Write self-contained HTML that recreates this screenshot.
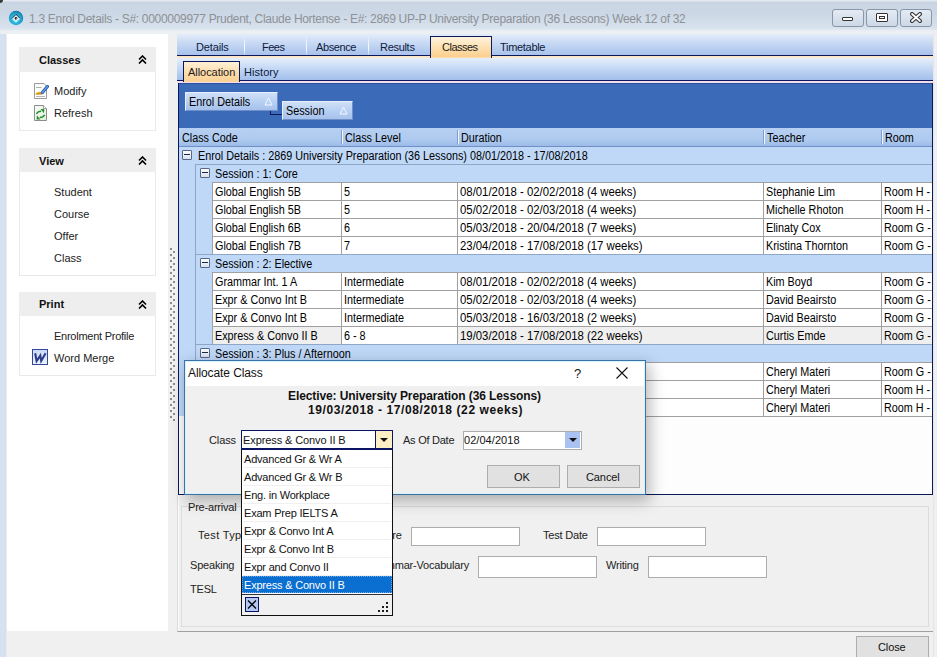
<!DOCTYPE html>
<html><head><meta charset="utf-8">
<style>
*{box-sizing:border-box;margin:0;padding:0}
html,body{width:937px;height:657px;overflow:hidden;background:#f0f0f0;font-family:"Liberation Sans",sans-serif;font-size:11px;color:#000}
.a{position:absolute}
.t{position:absolute;white-space:pre}
</style></head><body>
<div class="a" style="left:0;top:0;width:937px;height:657px;background:#f0f0f0;overflow:hidden">

<div class="a" style="left:0px;top:0px;width:937px;height:30px;background:linear-gradient(#e9eef4,#c9d5e2 8%,#ccd8e5 50%,#d6e1ec 90%,#dfe8f0)"></div>
<div class="a" style="left:0px;top:30px;width:937px;height:4px;background:linear-gradient(#e9eef3,#eef0f3)"></div>
<div class="a" style="left:0px;top:34px;width:7px;height:623px;background:linear-gradient(90deg,#d3e2f5,#d5e2f2 45%,#d9e0ea 80%,#eef3f8)"></div>
<div class="a" style="left:933px;top:34px;width:4px;height:623px;background:linear-gradient(90deg,#e2e2e2,#f2f2f2 50%,#e8eef6)"></div>
<div class="a" style="left:-3px;top:-3px;width:6px;height:6px;border-radius:3px;background:#3a3a3a"></div>
<svg class="a" style="left:8px;top:10px" width="16" height="16" viewBox="0 0 16 16">
<defs><radialGradient id="ag" cx="0.45" cy="0.6" r="0.6"><stop offset="0" stop-color="#3fcbef"/><stop offset="0.7" stop-color="#23a3cf"/><stop offset="1" stop-color="#13739e"/></radialGradient></defs>
<circle cx="8" cy="8" r="7.2" fill="url(#ag)"/>
<path d="M8 4.4 L12.1 8.4 L8 12.4 L3.9 8.6 Z" fill="#e4f4f8"/>
<path d="M3.9 8.6 L8 4.4 L12.1 8.4" fill="none" stroke="#16222a" stroke-width="0.9"/>
<path d="M3.9 8.6 L8 12.4 L12.1 8.4" fill="none" stroke="#8ee8fb" stroke-width="0.9"/>
<circle cx="8" cy="8.4" r="1.3" fill="#1a1420"/><circle cx="8.3" cy="8.9" r="0.6" fill="#f4f0f4"/>
</svg>
<div class="t" style="left:29px;top:11.84px;font-size:12px;line-height:14px;color:#8e9197;letter-spacing:-0.3px;">1.3 Enrol Details - S#: 0000009977 Prudent, Claude Hortense - E#: 2869 UP-P University Preparation (36 Lessons) Week 12 of 32</div>
<div class="a" style="left:832px;top:9px;width:32px;height:18px;border:1px solid #8996a8;border-radius:3px;background:linear-gradient(#e4ebf4,#cdd8e6)"></div>
<div class="a" style="left:866px;top:9px;width:32px;height:18px;border:1px solid #8996a8;border-radius:3px;background:linear-gradient(#e4ebf4,#cdd8e6)"></div>
<div class="a" style="left:900px;top:9px;width:32px;height:18px;border:1px solid #8996a8;border-radius:3px;background:linear-gradient(#e4ebf4,#cdd8e6)"></div>
<div class="a" style="left:842px;top:17px;width:11px;height:4px;border:1px solid #333;background:#fff;border-radius:1px"></div>
<div class="a" style="left:876px;top:13px;width:12px;height:9px;border:1px solid #333;background:#fff;border-radius:1px"></div>
<div class="a" style="left:879px;top:16px;width:6px;height:3px;border:1px solid #333"></div>
<svg class="a" style="left:909px;top:12px" width="14" height="11" viewBox="0 0 14 11"><path d="M3 2 L11 9 M11 2 L3 9" stroke="#333" stroke-width="4" stroke-linecap="round"/><path d="M3 2 L11 9 M11 2 L3 9" stroke="#fff" stroke-width="1.8" stroke-linecap="round"/></svg>
<div class="a" style="left:7px;top:34px;width:161px;height:597px;background:#fff"></div>
<div class="a" style="left:19px;top:47px;width:137px;height:84px;border:1px solid #e9e9e9;background:#fff"></div>
<div class="a" style="left:19px;top:47px;width:137px;height:25px;background:#eeeeee"></div>
<div class="t" style="left:39px;top:53.69px;font-size:11px;line-height:13px;font-weight:bold;color:#111;">Classes</div>
<svg class="a" style="left:138px;top:55px" width="9" height="9" viewBox="0 0 9 9"><path d="M1 4.5 L4.5 1 L8 4.5 M1 8.5 L4.5 5 L8 8.5" fill="none" stroke="#000" stroke-width="1.6"/></svg>
<svg class="a" style="left:34px;top:83px" width="15" height="16" viewBox="0 0 15 16">
<path d="M0.5 0.5 H10 L12.5 3 V15.5 H0.5 Z" fill="#fdfdfd" stroke="#999"/>
<path d="M2 4.5 H7.5" stroke="#a8b89a" stroke-width="1"/>
<path d="M2 13.5 H11" stroke="#b8b8b8" stroke-width="1"/>
<path d="M1.8 10.8 Q3.5 7.6 7.6 9.2 L8 11 L1.8 11.2 Z" fill="#f2b418"/>
<path d="M1.8 11 H8" stroke="#b87a10" stroke-width="1"/>
<path d="M8.4 9.6 L13.4 3.6" stroke="#2456a8" stroke-width="3.2" stroke-linecap="round"/>
<path d="M8.4 9.6 L13.4 3.6" stroke="#5f98e8" stroke-width="1.6" stroke-linecap="round"/>
</svg>
<svg class="a" style="left:34px;top:105px" width="14" height="16" viewBox="0 0 14 16">
<defs><linearGradient id="rg" x1="0" y1="0" x2="1" y2="1"><stop offset="0" stop-color="#f6fbf4"/><stop offset="1" stop-color="#dff2da"/></linearGradient></defs>
<path d="M0.5 0.5 H9.5 L12.5 3.5 V15.5 H0.5 Z" fill="url(#rg)" stroke="#8e8e8e"/>
<path d="M9.5 0.5 V3.5 H12.5" fill="#fff" stroke="#9a9a9a"/>
<path d="M2.4 9 Q4 6.2 7.2 6.3" fill="none" stroke="#2d8a34" stroke-width="1.4"/>
<path d="M6.6 4 L10.2 4 L10 8.2 Z" fill="#2d8a34"/>
<path d="M10.6 9.8 Q9.2 12.4 5.8 12.5" fill="none" stroke="#2d8a34" stroke-width="1.4"/>
<path d="M6.4 14.6 L2.6 14.4 L2.9 10.2 Z" fill="#2d8a34"/>
</svg>
<div class="t" style="left:54px;top:84.69px;font-size:11px;line-height:13px;color:#222;">Modify</div>
<div class="t" style="left:54px;top:106.69px;font-size:11px;line-height:13px;color:#222;">Refresh</div>
<div class="a" style="left:19px;top:148px;width:137px;height:128px;border:1px solid #e9e9e9;background:#fff"></div>
<div class="a" style="left:19px;top:148px;width:137px;height:24px;background:#eeeeee"></div>
<div class="t" style="left:39px;top:154.69px;font-size:11px;line-height:13px;font-weight:bold;color:#111;">View</div>
<svg class="a" style="left:138px;top:156px" width="9" height="9" viewBox="0 0 9 9"><path d="M1 4.5 L4.5 1 L8 4.5 M1 8.5 L4.5 5 L8 8.5" fill="none" stroke="#000" stroke-width="1.6"/></svg>
<div class="t" style="left:54px;top:185.69px;font-size:11px;line-height:13px;color:#222;">Student</div>
<div class="t" style="left:54px;top:207.69px;font-size:11px;line-height:13px;color:#222;">Course</div>
<div class="t" style="left:54px;top:229.69px;font-size:11px;line-height:13px;color:#222;">Offer</div>
<div class="t" style="left:54px;top:251.69px;font-size:11px;line-height:13px;color:#222;">Class</div>
<div class="a" style="left:19px;top:292px;width:137px;height:84px;border:1px solid #e9e9e9;background:#fff"></div>
<div class="a" style="left:19px;top:292px;width:137px;height:24px;background:#eeeeee"></div>
<div class="t" style="left:39px;top:297.69px;font-size:11px;line-height:13px;font-weight:bold;color:#111;">Print</div>
<svg class="a" style="left:138px;top:300px" width="9" height="9" viewBox="0 0 9 9"><path d="M1 4.5 L4.5 1 L8 4.5 M1 8.5 L4.5 5 L8 8.5" fill="none" stroke="#000" stroke-width="1.6"/></svg>
<div class="t" style="left:54px;top:329.69px;font-size:11px;line-height:13px;color:#222;letter-spacing:-0.25px;">Enrolment Profile</div>
<svg class="a" style="left:32px;top:349px" width="16" height="16" viewBox="0 0 16 16">
<defs><linearGradient id="wg" x1="0" y1="0" x2="0" y2="1"><stop offset="0" stop-color="#c9d9f6"/><stop offset="1" stop-color="#eef5ff"/></linearGradient></defs>
<rect x="0.5" y="0.5" width="15" height="15" fill="url(#wg)" stroke="#34479a"/>
<path d="M3.2 4.2 L4.6 12 L8.3 6.6 L9.2 12 L13.6 4.2" fill="none" stroke="#2c3d8c" stroke-width="2.1" stroke-linejoin="miter"/>
</svg>
<div class="t" style="left:54px;top:351.69px;font-size:11px;line-height:13px;color:#222;">Word Merge</div>
<div class="a" style="left:168px;top:34px;width:9px;height:597px;background:#f0f0f0"></div>
<div class="a" style="left:170px;top:248px;width:2px;height:2px;background:#8c8c8c"></div>
<div class="a" style="left:173px;top:251px;width:2px;height:2px;background:#8c8c8c"></div>
<div class="a" style="left:170px;top:254px;width:2px;height:2px;background:#8c8c8c"></div>
<div class="a" style="left:173px;top:257px;width:2px;height:2px;background:#8c8c8c"></div>
<div class="a" style="left:170px;top:260px;width:2px;height:2px;background:#8c8c8c"></div>
<div class="a" style="left:173px;top:263px;width:2px;height:2px;background:#8c8c8c"></div>
<div class="a" style="left:170px;top:266px;width:2px;height:2px;background:#8c8c8c"></div>
<div class="a" style="left:173px;top:269px;width:2px;height:2px;background:#8c8c8c"></div>
<div class="a" style="left:170px;top:272px;width:2px;height:2px;background:#8c8c8c"></div>
<div class="a" style="left:173px;top:275px;width:2px;height:2px;background:#8c8c8c"></div>
<div class="a" style="left:170px;top:278px;width:2px;height:2px;background:#8c8c8c"></div>
<div class="a" style="left:173px;top:281px;width:2px;height:2px;background:#8c8c8c"></div>
<div class="a" style="left:170px;top:284px;width:2px;height:2px;background:#8c8c8c"></div>
<div class="a" style="left:173px;top:287px;width:2px;height:2px;background:#8c8c8c"></div>
<div class="a" style="left:170px;top:290px;width:2px;height:2px;background:#8c8c8c"></div>
<div class="a" style="left:173px;top:293px;width:2px;height:2px;background:#8c8c8c"></div>
<div class="a" style="left:170px;top:296px;width:2px;height:2px;background:#8c8c8c"></div>
<div class="a" style="left:173px;top:299px;width:2px;height:2px;background:#8c8c8c"></div>
<div class="a" style="left:170px;top:302px;width:2px;height:2px;background:#8c8c8c"></div>
<div class="a" style="left:173px;top:305px;width:2px;height:2px;background:#8c8c8c"></div>
<div class="a" style="left:170px;top:308px;width:2px;height:2px;background:#8c8c8c"></div>
<div class="a" style="left:173px;top:311px;width:2px;height:2px;background:#8c8c8c"></div>
<div class="a" style="left:170px;top:314px;width:2px;height:2px;background:#8c8c8c"></div>
<div class="a" style="left:173px;top:317px;width:2px;height:2px;background:#8c8c8c"></div>
<div class="a" style="left:170px;top:320px;width:2px;height:2px;background:#8c8c8c"></div>
<div class="a" style="left:173px;top:323px;width:2px;height:2px;background:#8c8c8c"></div>
<div class="a" style="left:170px;top:326px;width:2px;height:2px;background:#8c8c8c"></div>
<div class="a" style="left:173px;top:329px;width:2px;height:2px;background:#8c8c8c"></div>
<div class="a" style="left:170px;top:332px;width:2px;height:2px;background:#8c8c8c"></div>
<div class="a" style="left:173px;top:335px;width:2px;height:2px;background:#8c8c8c"></div>
<div class="a" style="left:170px;top:338px;width:2px;height:2px;background:#8c8c8c"></div>
<div class="a" style="left:173px;top:341px;width:2px;height:2px;background:#8c8c8c"></div>
<div class="a" style="left:170px;top:344px;width:2px;height:2px;background:#8c8c8c"></div>
<div class="a" style="left:173px;top:347px;width:2px;height:2px;background:#8c8c8c"></div>
<div class="a" style="left:170px;top:350px;width:2px;height:2px;background:#8c8c8c"></div>
<div class="a" style="left:173px;top:353px;width:2px;height:2px;background:#8c8c8c"></div>
<div class="a" style="left:170px;top:356px;width:2px;height:2px;background:#8c8c8c"></div>
<div class="a" style="left:173px;top:359px;width:2px;height:2px;background:#8c8c8c"></div>
<div class="a" style="left:170px;top:362px;width:2px;height:2px;background:#8c8c8c"></div>
<div class="a" style="left:173px;top:365px;width:2px;height:2px;background:#8c8c8c"></div>
<div class="a" style="left:170px;top:368px;width:2px;height:2px;background:#8c8c8c"></div>
<div class="a" style="left:173px;top:371px;width:2px;height:2px;background:#8c8c8c"></div>
<div class="a" style="left:170px;top:374px;width:2px;height:2px;background:#8c8c8c"></div>
<div class="a" style="left:173px;top:377px;width:2px;height:2px;background:#8c8c8c"></div>
<div class="a" style="left:170px;top:380px;width:2px;height:2px;background:#8c8c8c"></div>
<div class="a" style="left:173px;top:383px;width:2px;height:2px;background:#8c8c8c"></div>
<div class="a" style="left:170px;top:386px;width:2px;height:2px;background:#8c8c8c"></div>
<div class="a" style="left:173px;top:389px;width:2px;height:2px;background:#8c8c8c"></div>
<div class="a" style="left:170px;top:392px;width:2px;height:2px;background:#8c8c8c"></div>
<div class="a" style="left:173px;top:395px;width:2px;height:2px;background:#8c8c8c"></div>
<div class="a" style="left:170px;top:398px;width:2px;height:2px;background:#8c8c8c"></div>
<div class="a" style="left:173px;top:401px;width:2px;height:2px;background:#8c8c8c"></div>
<div class="a" style="left:170px;top:404px;width:2px;height:2px;background:#8c8c8c"></div>
<div class="a" style="left:173px;top:407px;width:2px;height:2px;background:#8c8c8c"></div>
<div class="a" style="left:170px;top:410px;width:2px;height:2px;background:#8c8c8c"></div>
<div class="a" style="left:173px;top:413px;width:2px;height:2px;background:#8c8c8c"></div>
<div class="a" style="left:170px;top:416px;width:2px;height:2px;background:#8c8c8c"></div>
<div class="a" style="left:173px;top:419px;width:2px;height:2px;background:#8c8c8c"></div>
<div class="a" style="left:177px;top:34px;width:756px;height:21px;background:linear-gradient(#e4edfa,#c9daf4 40%,#a8c2ec)"></div>
<div class="a" style="left:177px;top:55px;width:756px;height:1px;background:#0b1859"></div>
<div class="a" style="left:177px;top:56px;width:756px;height:2px;background:linear-gradient(#fde3bd,#f9e9d4)"></div>
<div class="a" style="left:244px;top:37px;width:1px;height:18px;background:linear-gradient(rgba(255,255,255,0.2),#f4f8ff 40%,#f4f8ff 70%,rgba(255,255,255,0.3))"></div>
<div class="a" style="left:306px;top:37px;width:1px;height:18px;background:linear-gradient(rgba(255,255,255,0.2),#f4f8ff 40%,#f4f8ff 70%,rgba(255,255,255,0.3))"></div>
<div class="a" style="left:368px;top:37px;width:1px;height:18px;background:linear-gradient(rgba(255,255,255,0.2),#f4f8ff 40%,#f4f8ff 70%,rgba(255,255,255,0.3))"></div>
<div class="a" style="left:430px;top:36px;width:62px;height:22px;border:1px solid #0b1859;border-bottom:0;background:linear-gradient(#fff3dc,#fde0b0 50%,#fbcf8f 95%,#fde3bd)"></div>
<div class="t" style="left:196px;top:40.69px;font-size:11px;line-height:13px;color:#0d1a40;letter-spacing:-0.15px;">Details</div>
<div class="t" style="left:262px;top:40.69px;font-size:11px;line-height:13px;color:#0d1a40;letter-spacing:-0.5px;">Fees</div>
<div class="t" style="left:316px;top:40.69px;font-size:11px;line-height:13px;color:#0d1a40;letter-spacing:-0.4px;">Absence</div>
<div class="t" style="left:380px;top:40.69px;font-size:11px;line-height:13px;color:#0d1a40;letter-spacing:-0.3px;">Results</div>
<div class="t" style="left:442px;top:40.69px;font-size:11px;line-height:13px;color:#1a1a1a;letter-spacing:-0.5px;">Classes</div>
<div class="t" style="left:500px;top:40.69px;font-size:11px;line-height:13px;color:#0d1a40;letter-spacing:-0.3px;">Timetable</div>
<div class="a" style="left:177px;top:58px;width:756px;height:22px;background:linear-gradient(#e6effc,#c6d9f5 45%,#a2bfec)"></div>
<div class="a" style="left:177px;top:80px;width:756px;height:1px;background:#0b1859"></div>
<div class="a" style="left:177px;top:81px;width:756px;height:2px;background:#f1dcf0"></div>
<div class="a" style="left:183px;top:61px;width:57px;height:21px;border:1px solid #0b1859;border-bottom:0;background:linear-gradient(#fff1d8,#fddcaa 55%,#fbd093)"></div>
<div class="t" style="left:188px;top:65.69px;font-size:11px;line-height:13px;color:#1a1a1a;letter-spacing:-0.05px;">Allocation</div>
<div class="t" style="left:244px;top:65.69px;font-size:11px;line-height:13px;color:#0d1a40;letter-spacing:0.05px;">History</div>
<div class="a" style="left:178px;top:83px;width:755px;height:412px;background:#3b6bb8;border:1px solid #0b1859;border-top:0"></div>
<div class="a" style="left:179px;top:83px;width:753px;height:1px;background:#2a4f98"></div>
<div class="a" style="left:270px;top:110px;width:1px;height:5px;background:#0b1859"></div>
<div class="a" style="left:270px;top:114px;width:12px;height:1px;background:#0b1859"></div>
<div class="a" style="left:185px;top:92px;width:93px;height:19px;background:linear-gradient(#cfe0f8,#b4cdf1 60%,#a6c1ec);border-right:1px solid #6f8fc8;border-bottom:1px solid #6f8fc8;border-left:1px solid #e6efff;border-top:1px solid #e6efff"></div>
<div class="t" style="left:189px;top:94.84px;font-size:12px;line-height:14px;color:#000;transform:scaleX(0.9);transform-origin:0 0;">Enrol Details</div>
<svg class="a" style="left:264px;top:97px" width="9" height="9" viewBox="0 0 9 9"><path d="M4.5 1 L8 8 L1 8 Z" fill="none" stroke="#f4f8ff" stroke-width="1"/></svg>
<div class="a" style="left:282px;top:101px;width:71px;height:19px;background:linear-gradient(#cfe0f8,#b4cdf1 60%,#a6c1ec);border-right:1px solid #6f8fc8;border-bottom:1px solid #6f8fc8;border-left:1px solid #e6efff;border-top:1px solid #e6efff"></div>
<div class="t" style="left:286px;top:103.84px;font-size:12px;line-height:14px;color:#000;transform:scaleX(0.9);transform-origin:0 0;">Session</div>
<svg class="a" style="left:339px;top:106px" width="9" height="9" viewBox="0 0 9 9"><path d="M4.5 1 L8 8 L1 8 Z" fill="none" stroke="#f4f8ff" stroke-width="1"/></svg>
<div class="a" style="left:179px;top:128px;width:753px;height:19px;background:linear-gradient(#b7d0f2,#aecaef 65%,#9dbbe8);border-bottom:1px solid #6f90c6"></div>
<div class="a" style="left:341px;top:130px;width:1px;height:14px;background:#7f9cd0"></div>
<div class="a" style="left:342px;top:130px;width:1px;height:14px;background:#f2f7ff"></div>
<div class="a" style="left:457px;top:130px;width:1px;height:14px;background:#7f9cd0"></div>
<div class="a" style="left:458px;top:130px;width:1px;height:14px;background:#f2f7ff"></div>
<div class="a" style="left:763px;top:130px;width:1px;height:14px;background:#7f9cd0"></div>
<div class="a" style="left:764px;top:130px;width:1px;height:14px;background:#f2f7ff"></div>
<div class="a" style="left:881px;top:130px;width:1px;height:14px;background:#7f9cd0"></div>
<div class="a" style="left:882px;top:130px;width:1px;height:14px;background:#f2f7ff"></div>
<div class="t" style="left:182px;top:130.84px;font-size:12px;line-height:14px;color:#000;transform:scaleX(0.9);transform-origin:0 0;">Class Code</div>
<div class="t" style="left:345px;top:130.84px;font-size:12px;line-height:14px;color:#000;transform:scaleX(0.9);transform-origin:0 0;">Class Level</div>
<div class="t" style="left:461px;top:130.84px;font-size:12px;line-height:14px;color:#000;transform:scaleX(0.9);transform-origin:0 0;">Duration</div>
<div class="t" style="left:767px;top:130.84px;font-size:12px;line-height:14px;color:#000;transform:scaleX(0.9);transform-origin:0 0;">Teacher</div>
<div class="t" style="left:885px;top:130.84px;font-size:12px;line-height:14px;color:#000;transform:scaleX(0.9);transform-origin:0 0;">Room</div>
<div class="a" style="left:179px;top:147px;width:753px;height:269px;background:#bfd8f8"></div>
<div class="a" style="left:179px;top:416px;width:753px;height:78px;background:#fdfdfd"></div>
<div class="a" style="left:182px;top:150px;width:10px;height:10px;border:1px solid #56688a;border-radius:1px;background:linear-gradient(#ffffff,#d8e0ec)"></div>
<div class="a" style="left:184px;top:154px;width:6px;height:1px;background:#1a2a4a"></div>
<div class="t" style="left:198px;top:148.84px;font-size:12px;line-height:14px;color:#000;transform:scaleX(0.9);transform-origin:0 0;">Enrol Details : 2869 University Preparation (36 Lessons) 08/01/2018 - 17/08/2018</div>
<div class="a" style="left:195px;top:164px;width:737px;height:1px;background:#8fa6c6"></div>
<div class="a" style="left:195px;top:164px;width:1px;height:252px;background:#8fa6c6"></div>
<div class="a" style="left:195px;top:164px;width:737px;height:1px;background:#8fa6c6"></div>
<div class="a" style="left:200px;top:168px;width:10px;height:10px;border:1px solid #56688a;border-radius:1px;background:linear-gradient(#ffffff,#d8e0ec)"></div>
<div class="a" style="left:202px;top:172px;width:6px;height:1px;background:#1a2a4a"></div>
<div class="t" style="left:215px;top:166.84px;font-size:12px;line-height:14px;color:#000;transform:scaleX(0.9);transform-origin:0 0;">Session : 1: Core</div>
<div class="a" style="left:212px;top:182px;width:720px;height:18px;background:#fff"></div>
<div class="a" style="left:212px;top:182px;width:720px;height:1px;background:#a0a0a0"></div>
<div class="a" style="left:212px;top:182px;width:1px;height:18px;background:#a0a0a0"></div>
<div class="a" style="left:341px;top:182px;width:1px;height:18px;background:#a0a0a0"></div>
<div class="a" style="left:457px;top:182px;width:1px;height:18px;background:#a0a0a0"></div>
<div class="a" style="left:763px;top:182px;width:1px;height:18px;background:#a0a0a0"></div>
<div class="a" style="left:881px;top:182px;width:1px;height:18px;background:#a0a0a0"></div>
<div class="t" style="left:215px;top:184.84px;font-size:12px;line-height:14px;color:#000;transform:scaleX(0.9);transform-origin:0 0;">Global English 5B</div>
<div class="t" style="left:344px;top:184.84px;font-size:12px;line-height:14px;color:#000;transform:scaleX(0.9);transform-origin:0 0;">5</div>
<div class="t" style="left:460px;top:184.84px;font-size:12px;line-height:14px;color:#000;transform:scaleX(0.947);transform-origin:0 0;">08/01/2018 - 02/02/2018 (4 weeks)</div>
<div class="t" style="left:766px;top:184.84px;font-size:12px;line-height:14px;color:#000;transform:scaleX(0.9);transform-origin:0 0;">Stephanie Lim</div>
<div class="t" style="left:884px;top:184.84px;font-size:12px;line-height:14px;color:#000;transform:scaleX(0.9);transform-origin:0 0;">Room H -</div>
<div class="a" style="left:212px;top:200px;width:720px;height:18px;background:#fff"></div>
<div class="a" style="left:212px;top:200px;width:720px;height:1px;background:#a0a0a0"></div>
<div class="a" style="left:212px;top:200px;width:1px;height:18px;background:#a0a0a0"></div>
<div class="a" style="left:341px;top:200px;width:1px;height:18px;background:#a0a0a0"></div>
<div class="a" style="left:457px;top:200px;width:1px;height:18px;background:#a0a0a0"></div>
<div class="a" style="left:763px;top:200px;width:1px;height:18px;background:#a0a0a0"></div>
<div class="a" style="left:881px;top:200px;width:1px;height:18px;background:#a0a0a0"></div>
<div class="t" style="left:215px;top:202.84px;font-size:12px;line-height:14px;color:#000;transform:scaleX(0.9);transform-origin:0 0;">Global English 5B</div>
<div class="t" style="left:344px;top:202.84px;font-size:12px;line-height:14px;color:#000;transform:scaleX(0.9);transform-origin:0 0;">5</div>
<div class="t" style="left:460px;top:202.84px;font-size:12px;line-height:14px;color:#000;transform:scaleX(0.947);transform-origin:0 0;">05/02/2018 - 02/03/2018 (4 weeks)</div>
<div class="t" style="left:766px;top:202.84px;font-size:12px;line-height:14px;color:#000;transform:scaleX(0.9);transform-origin:0 0;">Michelle Rhoton</div>
<div class="t" style="left:884px;top:202.84px;font-size:12px;line-height:14px;color:#000;transform:scaleX(0.9);transform-origin:0 0;">Room H -</div>
<div class="a" style="left:212px;top:218px;width:720px;height:18px;background:#fff"></div>
<div class="a" style="left:212px;top:218px;width:720px;height:1px;background:#a0a0a0"></div>
<div class="a" style="left:212px;top:218px;width:1px;height:18px;background:#a0a0a0"></div>
<div class="a" style="left:341px;top:218px;width:1px;height:18px;background:#a0a0a0"></div>
<div class="a" style="left:457px;top:218px;width:1px;height:18px;background:#a0a0a0"></div>
<div class="a" style="left:763px;top:218px;width:1px;height:18px;background:#a0a0a0"></div>
<div class="a" style="left:881px;top:218px;width:1px;height:18px;background:#a0a0a0"></div>
<div class="t" style="left:215px;top:220.84px;font-size:12px;line-height:14px;color:#000;transform:scaleX(0.9);transform-origin:0 0;">Global English 6B</div>
<div class="t" style="left:344px;top:220.84px;font-size:12px;line-height:14px;color:#000;transform:scaleX(0.9);transform-origin:0 0;">6</div>
<div class="t" style="left:460px;top:220.84px;font-size:12px;line-height:14px;color:#000;transform:scaleX(0.947);transform-origin:0 0;">05/03/2018 - 20/04/2018 (7 weeks)</div>
<div class="t" style="left:766px;top:220.84px;font-size:12px;line-height:14px;color:#000;transform:scaleX(0.9);transform-origin:0 0;">Elinaty Cox</div>
<div class="t" style="left:884px;top:220.84px;font-size:12px;line-height:14px;color:#000;transform:scaleX(0.9);transform-origin:0 0;">Room G -</div>
<div class="a" style="left:212px;top:236px;width:720px;height:18px;background:#fff"></div>
<div class="a" style="left:212px;top:236px;width:720px;height:1px;background:#a0a0a0"></div>
<div class="a" style="left:212px;top:236px;width:1px;height:18px;background:#a0a0a0"></div>
<div class="a" style="left:341px;top:236px;width:1px;height:18px;background:#a0a0a0"></div>
<div class="a" style="left:457px;top:236px;width:1px;height:18px;background:#a0a0a0"></div>
<div class="a" style="left:763px;top:236px;width:1px;height:18px;background:#a0a0a0"></div>
<div class="a" style="left:881px;top:236px;width:1px;height:18px;background:#a0a0a0"></div>
<div class="t" style="left:215px;top:238.84px;font-size:12px;line-height:14px;color:#000;transform:scaleX(0.9);transform-origin:0 0;">Global English 7B</div>
<div class="t" style="left:344px;top:238.84px;font-size:12px;line-height:14px;color:#000;transform:scaleX(0.9);transform-origin:0 0;">7</div>
<div class="t" style="left:460px;top:238.84px;font-size:12px;line-height:14px;color:#000;transform:scaleX(0.947);transform-origin:0 0;">23/04/2018 - 17/08/2018 (17 weeks)</div>
<div class="t" style="left:766px;top:238.84px;font-size:12px;line-height:14px;color:#000;transform:scaleX(0.9);transform-origin:0 0;">Kristina Thornton</div>
<div class="t" style="left:884px;top:238.84px;font-size:12px;line-height:14px;color:#000;transform:scaleX(0.9);transform-origin:0 0;">Room G -</div>
<div class="a" style="left:212px;top:254px;width:720px;height:1px;background:#a0a0a0"></div>
<div class="a" style="left:195px;top:254px;width:737px;height:1px;background:#8fa6c6"></div>
<div class="a" style="left:200px;top:258px;width:10px;height:10px;border:1px solid #56688a;border-radius:1px;background:linear-gradient(#ffffff,#d8e0ec)"></div>
<div class="a" style="left:202px;top:262px;width:6px;height:1px;background:#1a2a4a"></div>
<div class="t" style="left:215px;top:256.84px;font-size:12px;line-height:14px;color:#000;transform:scaleX(0.9);transform-origin:0 0;">Session : 2: Elective</div>
<div class="a" style="left:212px;top:272px;width:720px;height:18px;background:#fff"></div>
<div class="a" style="left:212px;top:272px;width:720px;height:1px;background:#a0a0a0"></div>
<div class="a" style="left:212px;top:272px;width:1px;height:18px;background:#a0a0a0"></div>
<div class="a" style="left:341px;top:272px;width:1px;height:18px;background:#a0a0a0"></div>
<div class="a" style="left:457px;top:272px;width:1px;height:18px;background:#a0a0a0"></div>
<div class="a" style="left:763px;top:272px;width:1px;height:18px;background:#a0a0a0"></div>
<div class="a" style="left:881px;top:272px;width:1px;height:18px;background:#a0a0a0"></div>
<div class="t" style="left:215px;top:274.84px;font-size:12px;line-height:14px;color:#000;transform:scaleX(0.9);transform-origin:0 0;">Grammar Int. 1 A</div>
<div class="t" style="left:344px;top:274.84px;font-size:12px;line-height:14px;color:#000;transform:scaleX(0.9);transform-origin:0 0;">Intermediate</div>
<div class="t" style="left:460px;top:274.84px;font-size:12px;line-height:14px;color:#000;transform:scaleX(0.947);transform-origin:0 0;">08/01/2018 - 02/02/2018 (4 weeks)</div>
<div class="t" style="left:766px;top:274.84px;font-size:12px;line-height:14px;color:#000;transform:scaleX(0.9);transform-origin:0 0;">Kim Boyd</div>
<div class="t" style="left:884px;top:274.84px;font-size:12px;line-height:14px;color:#000;transform:scaleX(0.9);transform-origin:0 0;">Room G -</div>
<div class="a" style="left:212px;top:290px;width:720px;height:18px;background:#fff"></div>
<div class="a" style="left:212px;top:290px;width:720px;height:1px;background:#a0a0a0"></div>
<div class="a" style="left:212px;top:290px;width:1px;height:18px;background:#a0a0a0"></div>
<div class="a" style="left:341px;top:290px;width:1px;height:18px;background:#a0a0a0"></div>
<div class="a" style="left:457px;top:290px;width:1px;height:18px;background:#a0a0a0"></div>
<div class="a" style="left:763px;top:290px;width:1px;height:18px;background:#a0a0a0"></div>
<div class="a" style="left:881px;top:290px;width:1px;height:18px;background:#a0a0a0"></div>
<div class="t" style="left:215px;top:292.84px;font-size:12px;line-height:14px;color:#000;transform:scaleX(0.9);transform-origin:0 0;">Expr &amp; Convo Int B</div>
<div class="t" style="left:344px;top:292.84px;font-size:12px;line-height:14px;color:#000;transform:scaleX(0.9);transform-origin:0 0;">Intermediate</div>
<div class="t" style="left:460px;top:292.84px;font-size:12px;line-height:14px;color:#000;transform:scaleX(0.947);transform-origin:0 0;">05/02/2018 - 02/03/2018 (4 weeks)</div>
<div class="t" style="left:766px;top:292.84px;font-size:12px;line-height:14px;color:#000;transform:scaleX(0.9);transform-origin:0 0;">David Beairsto</div>
<div class="t" style="left:884px;top:292.84px;font-size:12px;line-height:14px;color:#000;transform:scaleX(0.9);transform-origin:0 0;">Room G -</div>
<div class="a" style="left:212px;top:308px;width:720px;height:18px;background:#fff"></div>
<div class="a" style="left:212px;top:308px;width:720px;height:1px;background:#a0a0a0"></div>
<div class="a" style="left:212px;top:308px;width:1px;height:18px;background:#a0a0a0"></div>
<div class="a" style="left:341px;top:308px;width:1px;height:18px;background:#a0a0a0"></div>
<div class="a" style="left:457px;top:308px;width:1px;height:18px;background:#a0a0a0"></div>
<div class="a" style="left:763px;top:308px;width:1px;height:18px;background:#a0a0a0"></div>
<div class="a" style="left:881px;top:308px;width:1px;height:18px;background:#a0a0a0"></div>
<div class="t" style="left:215px;top:310.84px;font-size:12px;line-height:14px;color:#000;transform:scaleX(0.9);transform-origin:0 0;">Expr &amp; Convo Int B</div>
<div class="t" style="left:344px;top:310.84px;font-size:12px;line-height:14px;color:#000;transform:scaleX(0.9);transform-origin:0 0;">Intermediate</div>
<div class="t" style="left:460px;top:310.84px;font-size:12px;line-height:14px;color:#000;transform:scaleX(0.947);transform-origin:0 0;">05/03/2018 - 16/03/2018 (2 weeks)</div>
<div class="t" style="left:766px;top:310.84px;font-size:12px;line-height:14px;color:#000;transform:scaleX(0.9);transform-origin:0 0;">David Beairsto</div>
<div class="t" style="left:884px;top:310.84px;font-size:12px;line-height:14px;color:#000;transform:scaleX(0.9);transform-origin:0 0;">Room G -</div>
<div class="a" style="left:212px;top:326px;width:720px;height:18px;background:#efefef"></div>
<div class="a" style="left:342px;top:326px;width:116px;height:18px;background:#fff"></div>
<div class="a" style="left:212px;top:326px;width:720px;height:1px;background:#a0a0a0"></div>
<div class="a" style="left:212px;top:326px;width:1px;height:18px;background:#a0a0a0"></div>
<div class="a" style="left:341px;top:326px;width:1px;height:18px;background:#a0a0a0"></div>
<div class="a" style="left:457px;top:326px;width:1px;height:18px;background:#a0a0a0"></div>
<div class="a" style="left:763px;top:326px;width:1px;height:18px;background:#a0a0a0"></div>
<div class="a" style="left:881px;top:326px;width:1px;height:18px;background:#a0a0a0"></div>
<div class="t" style="left:215px;top:328.84px;font-size:12px;line-height:14px;color:#000;transform:scaleX(0.9);transform-origin:0 0;">Express &amp; Convo II B</div>
<div class="t" style="left:344px;top:328.84px;font-size:12px;line-height:14px;color:#000;transform:scaleX(0.9);transform-origin:0 0;">6 - 8</div>
<div class="t" style="left:460px;top:328.84px;font-size:12px;line-height:14px;color:#000;transform:scaleX(0.947);transform-origin:0 0;">19/03/2018 - 17/08/2018 (22 weeks)</div>
<div class="t" style="left:766px;top:328.84px;font-size:12px;line-height:14px;color:#000;transform:scaleX(0.9);transform-origin:0 0;">Curtis Emde</div>
<div class="t" style="left:884px;top:328.84px;font-size:12px;line-height:14px;color:#000;transform:scaleX(0.9);transform-origin:0 0;">Room G -</div>
<div class="a" style="left:212px;top:344px;width:720px;height:1px;background:#a0a0a0"></div>
<div class="a" style="left:195px;top:344px;width:737px;height:1px;background:#8fa6c6"></div>
<div class="a" style="left:200px;top:348px;width:10px;height:10px;border:1px solid #56688a;border-radius:1px;background:linear-gradient(#ffffff,#d8e0ec)"></div>
<div class="a" style="left:202px;top:352px;width:6px;height:1px;background:#1a2a4a"></div>
<div class="t" style="left:215px;top:346.84px;font-size:12px;line-height:14px;color:#000;transform:scaleX(0.9);transform-origin:0 0;">Session : 3: Plus / Afternoon</div>
<div class="a" style="left:212px;top:362px;width:720px;height:18px;background:#fff"></div>
<div class="a" style="left:212px;top:362px;width:720px;height:1px;background:#a0a0a0"></div>
<div class="a" style="left:212px;top:362px;width:1px;height:18px;background:#a0a0a0"></div>
<div class="a" style="left:341px;top:362px;width:1px;height:18px;background:#a0a0a0"></div>
<div class="a" style="left:457px;top:362px;width:1px;height:18px;background:#a0a0a0"></div>
<div class="a" style="left:763px;top:362px;width:1px;height:18px;background:#a0a0a0"></div>
<div class="a" style="left:881px;top:362px;width:1px;height:18px;background:#a0a0a0"></div>
<div class="t" style="left:766px;top:364.84px;font-size:12px;line-height:14px;color:#000;transform:scaleX(0.9);transform-origin:0 0;">Cheryl Materi</div>
<div class="t" style="left:884px;top:364.84px;font-size:12px;line-height:14px;color:#000;transform:scaleX(0.9);transform-origin:0 0;">Room G -</div>
<div class="a" style="left:212px;top:380px;width:720px;height:18px;background:#fff"></div>
<div class="a" style="left:212px;top:380px;width:720px;height:1px;background:#a0a0a0"></div>
<div class="a" style="left:212px;top:380px;width:1px;height:18px;background:#a0a0a0"></div>
<div class="a" style="left:341px;top:380px;width:1px;height:18px;background:#a0a0a0"></div>
<div class="a" style="left:457px;top:380px;width:1px;height:18px;background:#a0a0a0"></div>
<div class="a" style="left:763px;top:380px;width:1px;height:18px;background:#a0a0a0"></div>
<div class="a" style="left:881px;top:380px;width:1px;height:18px;background:#a0a0a0"></div>
<div class="t" style="left:766px;top:382.84px;font-size:12px;line-height:14px;color:#000;transform:scaleX(0.9);transform-origin:0 0;">Cheryl Materi</div>
<div class="t" style="left:884px;top:382.84px;font-size:12px;line-height:14px;color:#000;transform:scaleX(0.9);transform-origin:0 0;">Room H -</div>
<div class="a" style="left:212px;top:398px;width:720px;height:18px;background:#fff"></div>
<div class="a" style="left:212px;top:398px;width:720px;height:1px;background:#a0a0a0"></div>
<div class="a" style="left:212px;top:398px;width:1px;height:18px;background:#a0a0a0"></div>
<div class="a" style="left:341px;top:398px;width:1px;height:18px;background:#a0a0a0"></div>
<div class="a" style="left:457px;top:398px;width:1px;height:18px;background:#a0a0a0"></div>
<div class="a" style="left:763px;top:398px;width:1px;height:18px;background:#a0a0a0"></div>
<div class="a" style="left:881px;top:398px;width:1px;height:18px;background:#a0a0a0"></div>
<div class="t" style="left:766px;top:400.84px;font-size:12px;line-height:14px;color:#000;transform:scaleX(0.9);transform-origin:0 0;">Cheryl Materi</div>
<div class="t" style="left:884px;top:400.84px;font-size:12px;line-height:14px;color:#000;transform:scaleX(0.9);transform-origin:0 0;">Room H -</div>
<div class="a" style="left:212px;top:416px;width:720px;height:1px;background:#a0a0a0"></div>
<div class="a" style="left:177px;top:495px;width:756px;height:137px;background:#f0f0f0;border-left:1px solid #dcdcdc;border-bottom:1px solid #a0a0a0"></div>
<div class="a" style="left:178px;top:495px;width:1px;height:136px;background:#fafafa"></div>
<div class="a" style="left:181px;top:506px;width:748px;height:121px;border:1px solid #dcdcdc;border-left:1px solid #dcdcdc"></div>
<div class="t" style="left:188px;top:500.69px;font-size:11px;line-height:13px;color:#222;letter-spacing:-0.2px;">Pre-arrival</div>
<div class="t" style="left:198px;top:528.69px;font-size:11px;line-height:13px;color:#222;letter-spacing:0.35px;">Test Type</div>
<div class="t" style="left:374px;top:528.69px;font-size:11px;line-height:13px;color:#222;letter-spacing:-0.2px;">Score</div>
<div class="a" style="left:411px;top:527px;width:109px;height:19px;background:#fff;border:1px solid #adadad"></div>
<div class="t" style="left:543px;top:528.69px;font-size:11px;line-height:13px;color:#222;letter-spacing:-0.2px;">Test Date</div>
<div class="a" style="left:597px;top:527px;width:109px;height:19px;background:#fff;border:1px solid #adadad"></div>
<div class="t" style="left:190px;top:558.69px;font-size:11px;line-height:13px;color:#222;letter-spacing:-0.2px;">Speaking</div>
<div class="t" style="left:368px;top:558.69px;font-size:11px;line-height:13px;color:#222;letter-spacing:-0.2px;">Grammar-Vocabulary</div>
<div class="a" style="left:478px;top:556px;width:119px;height:22px;background:#fff;border:1px solid #adadad"></div>
<div class="t" style="left:606px;top:558.69px;font-size:11px;line-height:13px;color:#222;letter-spacing:-0.2px;">Writing</div>
<div class="a" style="left:648px;top:556px;width:119px;height:22px;background:#fff;border:1px solid #adadad"></div>
<div class="t" style="left:190px;top:582.69px;font-size:11px;line-height:13px;color:#222;letter-spacing:-0.2px;">TESL</div>
<div class="a" style="left:856px;top:636px;width:73px;height:24px;background:#e1e1e1;border:1px solid #adadad"></div>
<div class="t" style="left:878px;top:640.69px;font-size:11px;line-height:13px;color:#111;letter-spacing:-0.1px;">Close</div>
<div class="a" style="left:184px;top:360px;width:462px;height:135px;box-shadow:3px 5px 14px 1px rgba(0,0,0,0.28)"></div>
<div class="a" style="left:184px;top:360px;width:462px;height:135px;background:#f0f0f0;border:1px solid #3c72a8"></div>
<div class="a" style="left:185px;top:361px;width:460px;height:133px;border:1px solid #d6f2fb"></div>
<div class="a" style="left:186px;top:362px;width:458px;height:24px;background:#fff"></div>
<div class="t" style="left:188px;top:365.84px;font-size:12px;line-height:14px;color:#111;letter-spacing:-0.1px;">Allocate Class</div>
<div class="t" style="left:574px;top:365.50px;font-size:13px;line-height:16px;color:#111;">?</div>
<svg class="a" style="left:616px;top:367px" width="12" height="12" viewBox="0 0 12 12"><path d="M0.5 0.5 L11.5 11.5 M11.5 0.5 L0.5 11.5" stroke="#111" stroke-width="1.1"/></svg>
<div class="t" style="left:288px;top:388.84px;font-size:12px;line-height:14px;font-weight:bold;color:#111;letter-spacing:-0.1px;">Elective: University Preparation (36 Lessons)</div>
<div class="t" style="left:308px;top:402.84px;font-size:12px;line-height:14px;font-weight:bold;color:#111;letter-spacing:0.6px;">19/03/2018 - 17/08/2018 (22 weeks)</div>
<div class="t" style="left:209px;top:433.69px;font-size:11px;line-height:13px;color:#222;letter-spacing:-0.1px;">Class</div>
<div class="t" style="left:403px;top:433.69px;font-size:11px;line-height:13px;color:#222;letter-spacing:-0.25px;">As Of Date</div>
<div class="a" style="left:463px;top:431px;width:119px;height:19px;background:#fff;border:1px solid #adadad"></div>
<div class="t" style="left:464px;top:433.69px;font-size:11px;line-height:13px;color:#111;letter-spacing:0.05px;">02/04/2018</div>
<div class="a" style="left:565px;top:432px;width:15px;height:16px;background:#a9c2f2"></div>
<svg class="a" style="left:569px;top:438px" width="8" height="4" viewBox="0 0 8 4"><path d="M0 0 H8 L4 4 Z" fill="#111"/></svg>
<div class="a" style="left:487px;top:465px;width:73px;height:23px;background:#e1e1e1;border:1px solid #adadad"></div>
<div class="t" style="left:514px;top:470.69px;font-size:11px;line-height:13px;color:#111;">OK</div>
<div class="a" style="left:567px;top:465px;width:73px;height:23px;background:#e1e1e1;border:1px solid #adadad"></div>
<div class="t" style="left:586px;top:470.69px;font-size:11px;line-height:13px;color:#111;letter-spacing:-0.1px;">Cancel</div>
<div class="a" style="left:241px;top:449px;width:152px;height:167px;background:#fff;border:1px solid #111;border-top:0"></div>
<div class="a" style="left:241px;top:430px;width:152px;height:20px;background:#fff;border:1px solid #0b1462;border-bottom:2px solid #0b1462"></div>
<div class="a" style="left:375px;top:431px;width:17px;height:17px;background:#fcefc6;border-left:1px solid #0b1462"></div>
<svg class="a" style="left:380px;top:438px" width="8" height="4" viewBox="0 0 8 4"><path d="M0 0 H8 L4 4 Z" fill="#111"/></svg>
<div class="t" style="left:243px;top:433.69px;font-size:11px;line-height:13px;color:#111;letter-spacing:-0.1px;">Express &amp; Convo II B</div>
<div class="a" style="left:243px;top:467px;width:148px;height:1px;background:#f0f0f0"></div>
<div class="t" style="left:244px;top:452.69px;font-size:11px;line-height:13px;color:#111;letter-spacing:-0.2px;">Advanced Gr &amp; Wr A</div>
<div class="a" style="left:243px;top:485px;width:148px;height:1px;background:#f0f0f0"></div>
<div class="t" style="left:244px;top:470.69px;font-size:11px;line-height:13px;color:#111;letter-spacing:-0.2px;">Advanced Gr &amp; Wr B</div>
<div class="a" style="left:243px;top:503px;width:148px;height:1px;background:#f0f0f0"></div>
<div class="t" style="left:244px;top:488.69px;font-size:11px;line-height:13px;color:#111;letter-spacing:-0.2px;">Eng. in Workplace</div>
<div class="a" style="left:243px;top:521px;width:148px;height:1px;background:#f0f0f0"></div>
<div class="t" style="left:244px;top:506.69px;font-size:11px;line-height:13px;color:#111;letter-spacing:-0.2px;">Exam Prep IELTS A</div>
<div class="a" style="left:243px;top:539px;width:148px;height:1px;background:#f0f0f0"></div>
<div class="t" style="left:244px;top:524.69px;font-size:11px;line-height:13px;color:#111;letter-spacing:-0.2px;">Expr &amp; Convo Int A</div>
<div class="a" style="left:243px;top:557px;width:148px;height:1px;background:#f0f0f0"></div>
<div class="t" style="left:244px;top:542.69px;font-size:11px;line-height:13px;color:#111;letter-spacing:-0.2px;">Expr &amp; Convo Int B</div>
<div class="a" style="left:243px;top:575px;width:148px;height:1px;background:#f0f0f0"></div>
<div class="t" style="left:244px;top:560.69px;font-size:11px;line-height:13px;color:#111;letter-spacing:-0.2px;">Expr and Convo II</div>
<div class="a" style="left:242px;top:576px;width:150px;height:17px;background:#0b6fd1;outline:1px dotted #6aa8e8;outline-offset:-1px"></div>
<div class="t" style="left:244px;top:578.69px;font-size:11px;line-height:13px;color:#fff;letter-spacing:-0.2px;">Express &amp; Convo II B</div>
<div class="a" style="left:242px;top:594px;width:150px;height:1px;background:#333"></div>
<div class="a" style="left:242px;top:595px;width:150px;height:20px;background:#f0f0f0"></div>
<div class="a" style="left:245px;top:597px;width:14px;height:15px;background:#b4c8f2;border:1px solid #0b1462"></div>
<svg class="a" style="left:247px;top:600px" width="10" height="9" viewBox="0 0 10 9"><path d="M1 0.5 L9 8.5 M9 0.5 L1 8.5" stroke="#000" stroke-width="1.3"/></svg>
<div class="a" style="left:386px;top:602px;width:2px;height:2px;background:#1a1a1a"></div>
<div class="a" style="left:382px;top:606px;width:2px;height:2px;background:#1a1a1a"></div>
<div class="a" style="left:386px;top:606px;width:2px;height:2px;background:#1a1a1a"></div>
<div class="a" style="left:378px;top:610px;width:2px;height:2px;background:#1a1a1a"></div>
<div class="a" style="left:382px;top:610px;width:2px;height:2px;background:#1a1a1a"></div>
<div class="a" style="left:386px;top:610px;width:2px;height:2px;background:#1a1a1a"></div>
</div></body></html>
